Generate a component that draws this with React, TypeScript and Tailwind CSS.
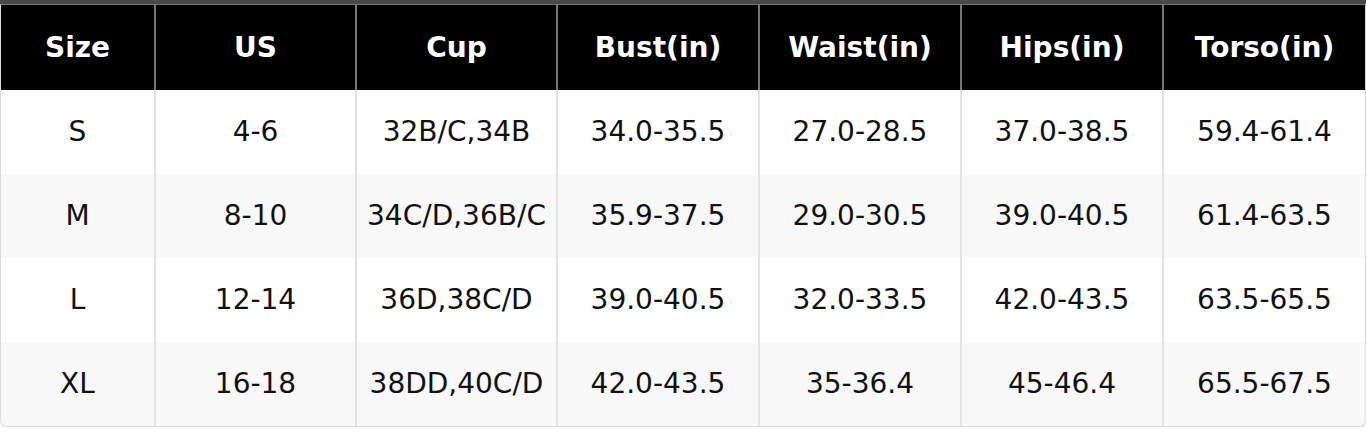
const headers = ["Size", "US", "Cup", "Bust(in)", "Waist(in)", "Hips(in)", "Torso(in)"];

const rows = [
  ["S", "4-6", "32B/C,34B", "34.0-35.5", "27.0-28.5", "37.0-38.5", "59.4-61.4"],
  ["M", "8-10", "34C/D,36B/C", "35.9-37.5", "29.0-30.5", "39.0-40.5", "61.4-63.5"],
  ["L", "12-14", "36D,38C/D", "39.0-40.5", "32.0-33.5", "42.0-43.5", "63.5-65.5"],
  ["XL", "16-18", "38DD,40C/D", "42.0-43.5", "35-36.4", "45-46.4", "65.5-67.5"],
];

const widths = [153, 201, 201, 202, 202, 202, 203];

export default function App() {
  return (
    <div className="w-[1366px] bg-white font-['DejaVu_Sans',sans-serif]">
      <div className="h-1 bg-[#4a4a4a]" />
      <div className="overflow-hidden rounded-b-lg border border-[#dcdcdc] border-t-[#777] shadow-[0_2px_4px_rgba(0,0,0,0.12)]">
        <table className="w-full table-fixed border-separate border-spacing-0">
          <colgroup>
            {widths.map((w, i) => (
              <col key={i} style={{ width: w }} />
            ))}
          </colgroup>
          <thead>
            <tr className="bg-black">
              {headers.map((h, i) => (
                <th
                  key={h}
                  className={`h-[85px] text-center text-[28px] font-bold text-white ${
                    i > 0 ? "border-l-2 border-[#777]" : ""
                  }`}
                >
                  {h}
                </th>
              ))}
            </tr>
          </thead>
          <tbody>
            {rows.map((r, ri) => (
              <tr key={ri} className={ri % 2 === 1 ? "bg-[#f8f8f8]" : "bg-white"}>
                {r.map((c, ci) => (
                  <td
                    key={ci}
                    className={`h-[84px] text-center text-[28px] text-[#111] ${
                      ci > 0 ? "border-l-2 border-[#e2e2e2]" : ""
                    }`}
                  >
                    {c}
                  </td>
                ))}
              </tr>
            ))}
          </tbody>
        </table>
      </div>
    </div>
  );
}
